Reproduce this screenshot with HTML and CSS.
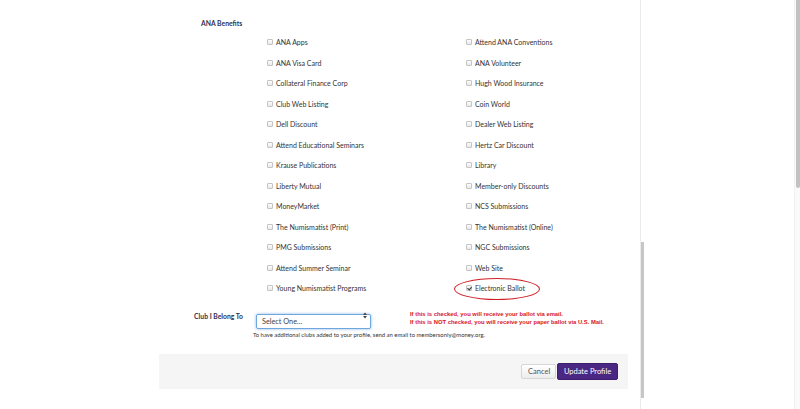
FILE: index.html
```
<!DOCTYPE html>
<html lang="en">
<head>
    <meta charset="UTF-8">
    <meta name="viewport" content="width=device-width, initial-scale=1.0">
    <title>Edit Profile</title>
    <link rel="stylesheet" href="styles.css">
</head>
<body>
    <div class="window">
        <main class="frame">
            <form class="profile-form">
                <h3 class="benefits-title">ANA Benefits</h3>
                <div class="benefits">
                    <label class="benefit"><input type="checkbox">ANA Apps</label>
                    <label class="benefit"><input type="checkbox">Attend ANA Conventions</label>
                    <label class="benefit"><input type="checkbox">ANA Visa Card</label>
                    <label class="benefit"><input type="checkbox">ANA Volunteer</label>
                    <label class="benefit"><input type="checkbox">Collateral Finance Corp</label>
                    <label class="benefit"><input type="checkbox">Hugh Wood Insurance</label>
                    <label class="benefit"><input type="checkbox">Club Web Listing</label>
                    <label class="benefit"><input type="checkbox">Coin World</label>
                    <label class="benefit"><input type="checkbox">Dell Discount</label>
                    <label class="benefit"><input type="checkbox">Dealer Web Listing</label>
                    <label class="benefit"><input type="checkbox">Attend Educational Seminars</label>
                    <label class="benefit"><input type="checkbox">Hertz Car Discount</label>
                    <label class="benefit"><input type="checkbox">Krause Publications</label>
                    <label class="benefit"><input type="checkbox">Library</label>
                    <label class="benefit"><input type="checkbox">Liberty Mutual</label>
                    <label class="benefit"><input type="checkbox">Member-only Discounts</label>
                    <label class="benefit"><input type="checkbox">MoneyMarket</label>
                    <label class="benefit"><input type="checkbox">NCS Submissions</label>
                    <label class="benefit"><input type="checkbox">The Numismatist (Print)</label>
                    <label class="benefit"><input type="checkbox">The Numismatist (Online)</label>
                    <label class="benefit"><input type="checkbox">PMG Submissions</label>
                    <label class="benefit"><input type="checkbox">NGC Submissions</label>
                    <label class="benefit"><input type="checkbox">Attend Summer Seminar</label>
                    <label class="benefit"><input type="checkbox">Web Site</label>
                    <label class="benefit"><input type="checkbox">Young Numismatist Programs</label>
                    <label class="benefit ballot"><input type="checkbox" checked>Electronic Ballot<span class="marker"></span></label>
                </div>

                <div class="club-row">
                    <label class="club-label" for="club">Club I Belong To</label>
                    <div class="club-field">
                        <div class="select-wrap">
                            <select id="club">
                                <option>Select One...</option>
                            </select>
                            <svg class="select-arrows" width="4" height="7" viewBox="0 0 4 7">
                                <path d="M0 3 L2 0.5 L4 3 Z M0 4 L2 6.5 L4 4 Z" fill="#444"/>
                            </svg>
                        </div>
                        <p class="club-help">To have additional clubs added to your profile, send an email to membersonly@money.org.</p>
                    </div>
                    <div class="ballot-note">
                        <p>If this is checked, you will receive your ballot via email.</p>
                        <p>If this is NOT checked, you will receive your paper ballot via U.S. Mail.</p>
                    </div>
                </div>

                <div class="form-actions">
                    <button type="button" class="btn btn-cancel">Cancel</button>
                    <button type="submit" class="btn btn-primary">Update Profile</button>
                </div>
            </form>
        </main>
        <div class="frame-scroll"><span class="thumb"></span></div>
        <div class="page-scroll"><span class="thumb"></span></div>
    </div>
</body>
</html>
```

FILE: styles.css
```
body {
    margin: 0;
    padding: 0;
    background-color: #fff;
    font-family: 'Lato', 'Open Sans', sans-serif;
    color: #333;
    overflow: hidden;
}
.window {
    display: flex;
    width: 800px;
    height: 409px;
}
.frame {
    width: 640px;
    flex-shrink: 0;
    border-right: 1px solid #ebebeb;
}
.frame-scroll {
    width: 5px;
}
.frame-scroll .thumb {
    display: block;
    width: 3px;
    height: 156px;
    margin-top: 242px;
    background-color: #c6c6c6;
}
.page-scroll {
    margin-left: auto;
    width: 5px;
    border-left: 1px solid #f0f0f0;
    background-color: #fafafa;
}
.page-scroll .thumb {
    display: block;
    width: 4px;
    height: 188px;
    margin-left: 1px;
    background-color: #c2c2c2;
    border-radius: 0 0 2px 2px;
}
.benefits-title {
    margin: 17px 0 0 201px;
    font-size: 6.8px;
    line-height: 12px;
    font-weight: 700;
    color: #33304d;
}
.benefits {
    display: grid;
    grid-template-columns: 199px 199px;
    grid-auto-rows: 20.5px;
    padding-top: 2.75px;
    margin-left: 267px;
}
.benefit {
    display: flex;
    align-items: center;
    gap: 3px;
    font-size: 7px;
}
.benefit input {
    appearance: none;
    -webkit-appearance: none;
    margin: 0;
    width: 6px;
    height: 6px;
    border: 1px solid #c4c4c4;
    border-radius: 1px;
    background: linear-gradient(#fdfdfd, #e9e9e9);
    position: relative;
}
.benefit input:checked::after {
    content: '';
    position: absolute;
    left: 1px;
    top: 0;
    width: 2px;
    height: 3px;
    border: solid #333;
    border-width: 0 1px 1px 0;
    transform: rotate(40deg);
}
.ballot {
    position: relative;
}
.marker {
    position: absolute;
    left: -12px;
    top: 0;
    width: 86px;
    height: 22px;
    box-sizing: border-box;
    border: 1.5px solid #cf1f26;
    border-radius: 50%;
}
.club-row {
    display: flex;
    margin-top: 10px;
}
.club-label {
    flex-shrink: 0;
    width: 243px;
    text-align: right;
    font-size: 6.8px;
    font-weight: 700;
    line-height: 16px;
    color: #33304d;
}
.club-field {
    flex-shrink: 0;
    margin-left: 13px;
}
.select-wrap {
    position: relative;
    width: 115px;
}
.select-wrap select {
    appearance: none;
    -webkit-appearance: none;
    width: 115px;
    height: 15px;
    margin: 0;
    padding: 0 0 0 5px;
    font-family: 'Lato', sans-serif;
    font-size: 7.3px;
    color: #444;
    background-color: #fff;
    border: 1px solid #6ea6dd;
    border-radius: 2px;
    box-shadow: 0 0 3px rgba(90, 150, 220, 0.7);
    outline: none;
}
.select-arrows {
    position: absolute;
    right: 4px;
    top: 4px;
    pointer-events: none;
}
.club-help {
    margin: 1.5px 0 0 -3px;
    font-size: 5.9px;
    line-height: 7px;
    color: #333;
    white-space: nowrap;
    width: 115px;
}
.ballot-note {
    flex-shrink: 0;
    margin-left: 39px;
    padding-top: 2px;
}
.ballot-note p {
    margin: 0;
    font-family: 'Liberation Sans', Arial, sans-serif;
    font-size: 5.85px;
    line-height: 8px;
    font-weight: 700;
    color: #d8141c;
    white-space: nowrap;
}
.form-actions {
    display: flex;
    justify-content: flex-end;
    align-items: center;
    gap: 1px;
    width: 469px;
    height: 35px;
    margin: 16px 0 0 159px;
    padding: 1px 10px 0 0;
    box-sizing: border-box;
    background-color: #f5f5f5;
}
.btn {
    font-family: 'Lato', sans-serif;
    font-size: 7.5px;
    padding: 0 6px;
    border-radius: 2px;
    cursor: pointer;
}
.btn-cancel {
    height: 15px;
    width: 35px;
    color: #555;
    border: 1px solid #d6d6d6;
    background: linear-gradient(#fff, #ececec);
}
.btn-primary {
    height: 17px;
    width: 61px;
    padding: 0;
    color: #fff;
    border: 1px solid #3d1f6e;
    background-color: #4b2784;
}
```
